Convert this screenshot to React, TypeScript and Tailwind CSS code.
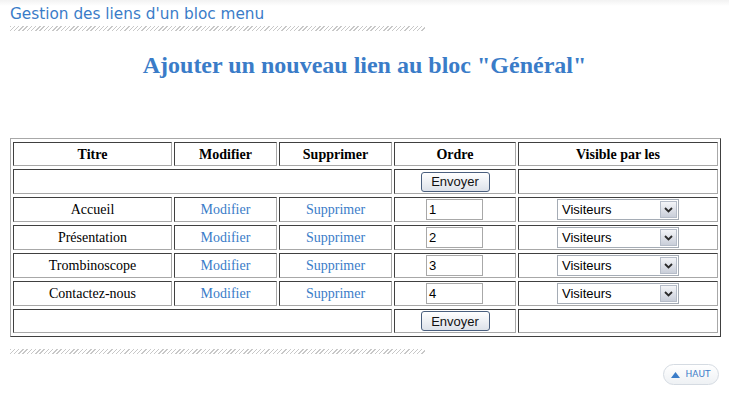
import React from "react";

const serif = { fontFamily: '"Liberation Serif", "Times New Roman", serif' };

function Hatch() {
  return (
    <div className="h-[5px] w-[415px] bg-[repeating-linear-gradient(135deg,#c8c8c8_0px,#c8c8c8_1px,transparent_1px,transparent_3px)]" />
  );
}

function Cell({ children, className = "", colSpan }: { children?: React.ReactNode; className?: string; colSpan?: number }) {
  return (
    <td
      colSpan={colSpan}
      className={
        "border border-t-[#404040] border-l-[#404040] border-b-[#a8a8a8] border-r-[#a8a8a8] p-0 text-center align-middle " +
        className
      }
    >
      {children}
    </td>
  );
}

function Btn() {
  return (
    <button className="h-[20px] w-[69px] rounded-[3px] border border-[#4a5f7e] bg-gradient-to-b from-white to-[#dde2ea] text-[13px] leading-none text-[#111] font-['Liberation_Sans',Arial,sans-serif]">
      Envoyer
    </button>
  );
}

function Sel() {
  return (
    <div className="mx-auto flex h-[21px] w-[122px] items-center border border-[#a5acb5] bg-white font-['Liberation_Sans',Arial,sans-serif]">
      <span className="flex-1 pl-[4px] text-left text-[13px] text-black">Visiteurs</span>
      <span className="mr-[1px] flex h-[17px] w-[17px] items-center justify-center border border-[#b5bcc8] bg-gradient-to-b from-[#f4f5f8] to-[#c9ced9]">
        <svg width="9" height="6" viewBox="0 0 9 6">
          <path d="M1 1 L4.5 4.5 L8 1" stroke="#2a2a2a" strokeWidth="1.8" fill="none" />
        </svg>
      </span>
    </div>
  );
}

function Inp({ v }: { v: string }) {
  return (
    <div className="ml-[31px] flex h-[21px] w-[57px] items-center border border-[#a8a8a8] bg-white pl-[2px] text-left text-[13px] text-black font-['Liberation_Sans',Arial,sans-serif]">
      {v}
    </div>
  );
}

export default function App() {
  const rows = ["Accueil", "Présentation", "Trombinoscope", "Contactez-nous"];
  return (
    <div className="relative h-[395px] w-[729px] overflow-hidden bg-white">
      <div className="h-[6px] bg-gradient-to-b from-[#f2f2f2] to-white" />
      <div className="px-[10px]">
        <div className="text-[15.3px] leading-[16px] text-[#3a7cc8] font-['DejaVu_Sans',Verdana,sans-serif]">
          Gestion des liens d'un bloc menu
        </div>
        <div className="mt-[4px]">
          <Hatch />
        </div>
        <h1 style={serif} className="mt-[20px] text-center text-[24px] font-bold leading-[28px] text-[#3a7cc8]">
          Ajouter un nouveau lien au bloc "Général"
        </h1>
        <table
          style={serif}
          className="mt-[59px] w-[711px] table-fixed border-separate border-spacing-x-[2px] border-spacing-y-[3px] border border-t-[#a8a8a8] border-l-[#a8a8a8] border-b-[#404040] border-r-[#404040] text-[14px] text-black"
        >
          <colgroup>
            <col className="w-[159px]" />
            <col className="w-[103px]" />
            <col className="w-[113px]" />
            <col className="w-[122px]" />
            <col className="w-[200px]" />
          </colgroup>
          <tbody>
            <tr className="h-[24px] font-bold">
              <Cell>Titre</Cell>
              <Cell>Modifier</Cell>
              <Cell>Supprimer</Cell>
              <Cell>Ordre</Cell>
              <Cell>Visible par les</Cell>
            </tr>
            <tr className="h-[25px]">
              <Cell colSpan={3} />
              <Cell>
                <Btn />
              </Cell>
              <Cell />
            </tr>
            {rows.map((r, i) => (
              <tr key={r} className="h-[25px]">
                <Cell>{r}</Cell>
                <Cell className="text-[#3a7cc8]">Modifier</Cell>
                <Cell className="text-[#3a7cc8]">Supprimer</Cell>
                <Cell>
                  <Inp v={String(i + 1)} />
                </Cell>
                <Cell>
                  <Sel />
                </Cell>
              </tr>
            ))}
            <tr className="h-[24px]">
              <Cell colSpan={3} />
              <Cell>
                <Btn />
              </Cell>
              <Cell />
            </tr>
          </tbody>
        </table>
        <div className="mt-[12px]">
          <Hatch />
        </div>
        <div className="mt-[10px] flex justify-end pr-[0px]">
          <div className="flex h-[21px] w-[56px] items-center justify-center gap-[5px] rounded-full border border-[#d5dbe2] bg-gradient-to-b from-white to-[#eef1f4] text-[9px] text-[#3a7cc8] font-['DejaVu_Sans',Verdana,sans-serif]">
            <svg width="9" height="6" viewBox="0 0 9 6">
              <path d="M0 6 L4.5 0 L9 6 Z" fill="#3a7cc8" />
            </svg>
            <span>HAUT</span>
          </div>
        </div>
      </div>
    </div>
  );
}
